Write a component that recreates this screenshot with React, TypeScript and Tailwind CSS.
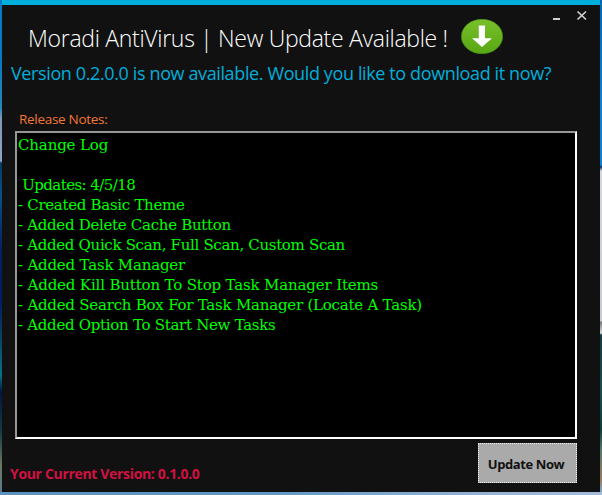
const log: { text: string; style: string }[] = [
  { text: 'Change Log', style: 'tracking-[-0.15px]' },
  { text: '', style: '' },
  { text: ' Updates: 4/5/18', style: 'tracking-[-0.57px]' },
  { text: '- Created Basic Theme', style: 'tracking-[-0.3px]' },
  { text: '- Added Delete Cache Button', style: 'tracking-[-0.3px]' },
  { text: '- Added Quick Scan, Full Scan, Custom Scan', style: 'tracking-[-0.32px]' },
  { text: '- Added Task Manager', style: 'tracking-[-0.2px]' },
  { text: '- Added Kill Button To Stop Task Manager Items', style: 'tracking-[-0.16px]' },
  { text: '- Added Search Box For Task Manager (Locate A Task)', style: 'tracking-[-0.23px]' },
  { text: '- Added Option To Start New Tasks', style: 'tracking-[-0.29px]' },
];

function DownloadIcon() {
  return (
    <svg className="ml-[12px] mt-[14px] h-[35px] w-[42px] shrink-0" viewBox="0 0 42 35">
      <defs>
        <linearGradient id="green" x1="0" y1="0" x2="0" y2="1">
          <stop offset="0" stopColor="#78c02a" />
          <stop offset="1" stopColor="#57a713" />
        </linearGradient>
      </defs>
      <ellipse cx="21" cy="17.5" rx="20.7" ry="17.2" fill="url(#green)" stroke="#459019" strokeWidth="0.5" />
      <path d="M17.8 6.5h6.2v12.7h7L21 28l-10-8.8h6.8z" fill="#fff" />
    </svg>
  );
}

export default function App() {
  return (
    <div className="flex h-[495px] w-[602px] flex-col overflow-hidden font-['Open_Sans','Noto_Sans',sans-serif]">
      <div className="flex h-[492px]">
        <div className="w-[2px] bg-[linear-gradient(#0878c4_0px,#0878c4_60px,#2588b8_108px,#8098b8_118px,#8ba5c4_161px,#063a62_163px,#08518a_195px,#03215f_250px,#001c68_300px,#073c60_330px,#087087_375px,#021640_392px,#153c44_432px,#6d7662_465px,#587d90_492px)]" />
        <main className="flex w-[598px] flex-col border-t-[5px] border-[#00aedb] bg-[#111]">
          <header className="flex h-[56px] whitespace-nowrap">
            <h1 className="ml-[26px] mt-[16px] w-[421px] text-[23px] font-light leading-[34px] tracking-[-0.3px] text-white">
              Moradi AntiVirus | New Update Available !
            </h1>
            <DownloadIcon />
            <svg className="ml-[50px] mt-[4px] h-[14px] w-[38px]" viewBox="0 0 38 14" fill="none" stroke="#d0d0d0">
              <path d="M0 10h7" strokeWidth="2" />
              <path d="M24.5 2.5l8.5 8M33 2.5l-8.5 8" strokeWidth="1.7" />
            </svg>
          </header>
          <p className="-mt-px ml-[9px] h-[49px] whitespace-nowrap text-[18px] leading-[27px] tracking-[-0.38px] text-[#00aedb]">
            Version 0.2.0.0 is now available. Would you like to download it now?
          </p>
          <p className="ml-[17px] h-[22px] whitespace-nowrap text-[13.5px] leading-[20px] tracking-[-0.3px] text-[#f37735]">
            Release Notes:
          </p>
          <section className="ml-[13px] h-[308px] w-[562px] border-2 border-b-white border-l-[#969696] border-r-white border-t-[#969696] bg-black pl-[1px] pt-[2px] font-['DejaVu_Serif',serif] text-[15px] text-[#00ff00]">
            {log.map((line, i) => (
              <div key={i} className="h-[20px] whitespace-pre leading-[20px]">
                <span className={line.style}>{line.text}</span>
              </div>
            ))}
          </section>
          <footer className="flex justify-between">
            <p className="ml-[8px] mt-[25px] whitespace-nowrap text-[14px] font-bold leading-[20px] tracking-[-0.33px] text-[#d11141]">
              Your Current Version: 0.1.0.0
            </p>
            <button className="mr-[23px] mt-[4px] h-[40px] w-[99px] whitespace-nowrap border border-dotted border-[#eee] bg-[#aaa] pr-[3px] pt-[3px] text-[13px] font-bold tracking-[-0.4px] text-[#111]">
              Update Now
            </button>
          </footer>
        </main>
        <div className="w-[2px] bg-[linear-gradient(#0068b8_0px,#1080d0_100px,#1080d0_165px,#082f65_167px,#d4d7dc_171px,#c7cbd1_321px,#777_322px,#d5dade_333px,#123c43_335px,#174f4c_390px,#0b403b_430px,#53796b_450px,#997b60_480px,#80a2bd_490px)]" />
      </div>
      <div className="h-[3px] bg-[linear-gradient(90deg,#5c92c0,#6298c5_45%,#96b2d2_80%,#a4bcda)]" />
    </div>
  );
}
